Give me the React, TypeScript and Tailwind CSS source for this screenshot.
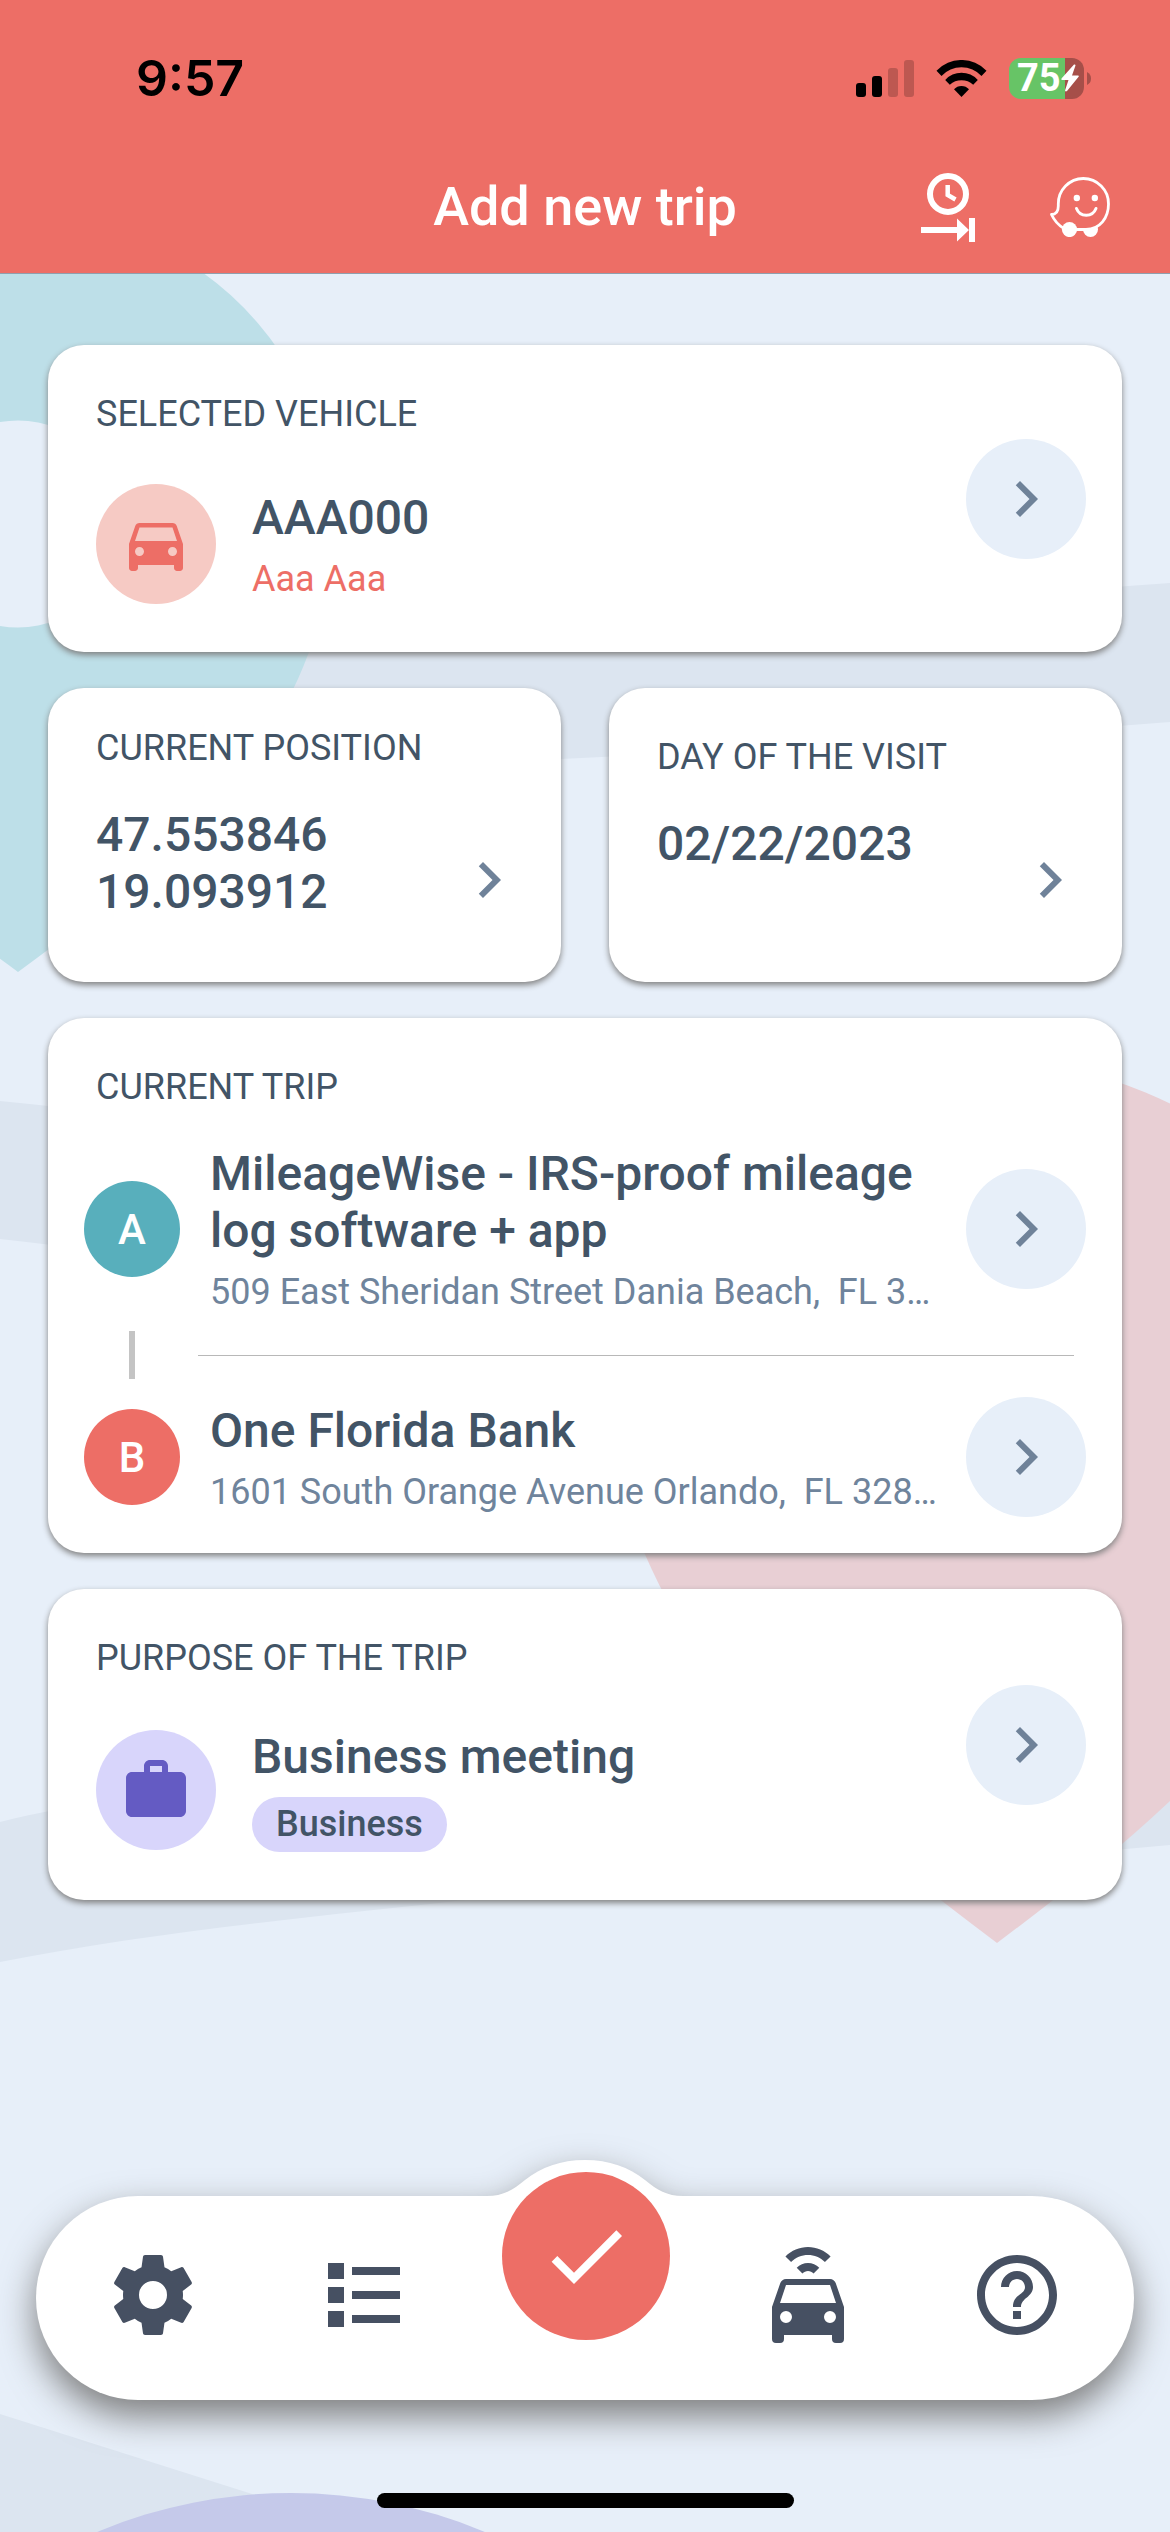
import React from 'react';
import { MdCheck, MdChevronRight, MdDirectionsCar, MdHelpOutline, MdWork } from 'react-icons/md';

interface TripStop {
  letter: string;
  name: string;
  address: string;
  badge: string;
}

// Addresses come already shortened to one line
const stops: TripStop[] = [
  {
    letter: 'A',
    name: 'MileageWise - IRS-proof mileage log software + app',
    address: '509 East Sheridan Street Dania Beach,  FL 3…',
    badge: 'bg-[#58afbc]',
  },
  {
    letter: 'B',
    name: 'One Florida Bank',
    address: '1601 South Orange Avenue Orlando,  FL 328…',
    badge: 'bg-[#ed6e66]',
  },
];

const MapBackground: React.FC = () => (
  <svg
    className="absolute inset-0 w-full h-full"
    viewBox="0 0 1170 2532"
    preserveAspectRatio="xMidYMin slice"
    aria-hidden="true"
  >
    {/* Roads */}
    <g fill="#dce5f0">
      <path d="M0 650 C400 640 800 610 1170 583 V722 C960 738 760 750 561 759 L0 800 Z" />
      <path d="M0 1101 C300 1130 600 1200 900 1250 V1400 C600 1380 300 1270 0 1239 Z" />
      <path d="M0 1822 C300 1750 800 1740 1170 1700 V1845 C900 1870 650 1878 421 1905 C270 1921 130 1936 0 1962 Z" />
      <path d="M0 2414 L249 2493 L360 2532 H0 Z" />
    </g>
    {/* Pins */}
    <path
      fill="#bddfe8"
      fillRule="evenodd"
      d="M18 972 C150 876 262 780 309 652 A316 316 0 1 0 -273 652 C-226 780 -114 876 18 972 Z M18 420.500 A103.500 103.500 0 1 1 18 627.500 A103.500 103.500 0 1 1 18 420.500 Z"
    />
    <path
      fill="#e8cfd4"
      d="M997 1943 C827 1815 672 1688 609 1451 A388 388 0 1 1 1385 1451 C1322 1688 1167 1815 997 1943 Z"
    />
    <circle cx="291" cy="2995" r="502" fill="#c5c9ea" />
  </svg>
);

const StatusBar: React.FC = () => (
  <div className="flex items-center justify-between h-[60px] pl-[136px] pr-[79px] text-black">
    <span className="font-['Inter',sans-serif] font-semibold text-[50px] leading-[60px]">9:57</span>
    <div className="flex items-center gap-[22px]">
      <svg width="58" height="37" viewBox="0 0 58 37" role="img" aria-label="Signal">
        <rect x="0" y="23" width="10" height="14" rx="3" />
        <rect x="16" y="16" width="10" height="21" rx="3" />
        <rect x="32" y="8" width="10" height="29" rx="3" opacity="0.2" />
        <rect x="48" y="0" width="10" height="37" rx="3" opacity="0.2" />
      </svg>
      <svg width="51" height="37" viewBox="0 0 50 37" role="img" aria-label="Wi-Fi">
        <path d="M0 10.700 A34.500 34.500 0 0 1 50 10.700 L45 16 A27.300 27.300 0 0 0 5 16 Z" />
        <path d="M8.700 20 A21.800 21.800 0 0 1 41.300 20 L36.700 24.700 A17.700 17.700 0 0 0 13.300 24.700 Z" />
        <path d="M17.500 29.300 A10 10 0 0 1 32.500 29.300 L25 37 Z" />
      </svg>
      <div className="flex items-center gap-[3px]">
        <div className="flex items-center h-[41px] w-[75px] pl-[8px] rounded-[12px] bg-linear-to-r from-[#67c466] from-75% to-[#a64f49] to-75%">
          <span className="font-bold text-[38px] leading-[41px] text-white">75</span>
          <svg className="shrink-0" width="18" height="28" viewBox="0 0 18 28" fill="#fff" aria-hidden="true">
            <path d="M13 0.500 L0.500 14.500 Q0 16 1 16 H7.500 L4 26.500 Q4.500 28 6 27 L17.800 12.500 Q18 11.500 17 11.500 H11 L14.500 1.500 Q14.500 0 13 0.500 Z" />
          </svg>
        </div>
        <svg width="4" height="13" viewBox="0 0 4 13" fill="#a64f49" aria-hidden="true">
          <path d="M0 0 Q4 2 4 6.500 Q4 11 0 13 Z" />
        </svg>
      </div>
    </div>
  </div>
);

const Header: React.FC = () => (
  <header className="relative bg-[#ed6e66] pt-12 border-b border-[#8f9fae]">
    <StatusBar />
    <div className="grid grid-cols-[1fr_auto_1fr] items-center h-[72px] mt-[63px] mb-[30px] px-[60px]">
      <h1 className="col-start-2 text-[54px] leading-[64px] font-medium text-white">Add new trip</h1>
      <div className="flex items-center justify-end gap-[75px]">
        <button aria-label="Trip time">
          <svg width="54" height="69" viewBox="0 0 54 69" fill="#fff">
            <circle cx="27" cy="21" r="18" fill="none" stroke="#fff" strokeWidth="6" />
            <path d="M26.700 12 V22 L34.500 26.500" fill="none" stroke="#fff" strokeWidth="4.500" />
            <path d="M0 54 H36 V45.500 L48 57 L36 68.500 V60 H0 Z" />
            <rect x="48" y="45" width="6" height="24" />
          </svg>
        </button>
        <button aria-label="Waze">
          <svg width="60" height="60" viewBox="0 0 60 60" fill="#fff">
            <circle cx="40.500" cy="52.500" r="7.500" />
            <path
              d="M19 52.500 H36 C50 52 58.500 41 58.500 27 A25.300 25.300 0 0 0 33.300 1.500 A25.300 25.300 0 0 0 8.300 27 V29 C8.300 34.500 6 37.500 1.500 37.500 C4 43 8 48 14 51.500 Z"
              fill="#ed6e66"
              stroke="#fff"
              strokeWidth="2.800"
              strokeLinejoin="round"
            />
            <circle cx="19.500" cy="52.500" r="7.600" />
            <circle cx="26.800" cy="21" r="3.200" />
            <circle cx="44.800" cy="21" r="3.200" />
            <path d="M26.500 31.500 C30 40.500 42.500 40.500 46 31.500" fill="none" stroke="#fff" strokeWidth="3" strokeLinecap="round" />
          </svg>
        </button>
      </div>
    </div>
  </header>
);

const Card: React.FC<{ className?: string; children: React.ReactNode }> = ({ className = '', children }) => (
  <section className={`bg-white rounded-[36px] shadow-[0_3px_6px_#808080] ${className}`}>{children}</section>
);

const CardTitle: React.FC<{ children: React.ReactNode }> = ({ children }) => (
  <h2 className="text-[36px] leading-[43px] uppercase">{children}</h2>
);

const OpenButton: React.FC<{ label: string }> = ({ label }) => (
  <button
    aria-label={label}
    className="flex items-center justify-center shrink-0 w-[120px] h-[120px] rounded-full bg-[#e7eff9] text-[#6f8299]"
  >
    <MdChevronRight size={72} />
  </button>
);

const NavIcon: React.FC<{ label: string; children: React.ReactNode }> = ({ label, children }) => (
  <button aria-label={label} className="w-24 h-24">
    {children}
  </button>
);

const BottomNav: React.FC = () => (
  <nav className="relative mx-9 mt-auto text-[#465062] drop-shadow-[0_16px_18px_#7c7c7c]">
    {/* Raised part behind the confirm button */}
    <svg
      className="absolute -top-9 left-1/2 -translate-x-1/2"
      width="196"
      height="38"
      viewBox="0 0 196 38"
      fill="#fff"
      aria-hidden="true"
    >
      <path d="M0 36 C16 36 26 30 38 20 C54 7 74 0 98 0 C122 0 142 7 158 20 C170 30 180 36 196 36 V38 H0 Z" />
    </svg>
    <div className="relative flex items-start justify-between rounded-full bg-white px-[69px] pt-[51px] pb-[57px]">
      <div className="flex gap-[115px]">
        <NavIcon label="Settings">
          <svg viewBox="0 0 24 24" fill="currentColor">
            <path d="M12,15.5A3.5,3.5 0 0,1 8.5,12A3.5,3.5 0 0,1 12,8.5A3.5,3.5 0 0,1 15.5,12A3.5,3.5 0 0,1 12,15.5M19.43,12.97C19.47,12.65 19.5,12.33 19.5,12C19.5,11.67 19.47,11.34 19.43,11L21.54,9.37C21.73,9.22 21.78,8.95 21.66,8.73L19.66,5.27C19.54,5.05 19.27,4.96 19.05,5.05L16.56,6.05C16.04,5.66 15.5,5.32 14.87,5.07L14.5,2.42C14.46,2.18 14.25,2 14,2H10C9.75,2 9.54,2.18 9.5,2.42L9.13,5.07C8.5,5.32 7.96,5.66 7.44,6.05L4.95,5.05C4.73,4.96 4.46,5.05 4.34,5.27L2.34,8.73C2.21,8.95 2.27,9.22 2.46,9.37L4.57,11C4.53,11.34 4.5,11.67 4.5,12C4.5,12.33 4.53,12.65 4.57,12.97L2.46,14.63C2.27,14.78 2.21,15.05 2.34,15.27L4.34,18.73C4.46,18.95 4.73,19.03 4.95,18.95L7.44,17.94C7.96,18.34 8.5,18.68 9.13,18.93L9.5,21.58C9.54,21.82 9.75,22 10,22H14C14.25,22 14.46,21.82 14.5,21.58L14.87,18.93C15.5,18.67 16.04,18.34 16.56,17.94L19.05,18.95C19.27,19.03 19.54,18.95 19.66,18.73L21.66,15.27C21.78,15.05 21.73,14.78 21.54,14.63L19.43,12.97Z" />
          </svg>
        </NavIcon>
        <NavIcon label="Trip list">
          <svg viewBox="0 0 24 24" fill="currentColor">
            <path d="M3,4H7V8H3V4M9,5V7H21V5H9M3,10H7V14H3V10M9,11V13H21V11H9M3,16H7V20H3V16M9,17V19H21V17H9" />
          </svg>
        </NavIcon>
      </div>
      <button
        aria-label="Save trip"
        className="flex items-center justify-center w-[168px] h-[168px] -mt-[75px] rounded-full bg-[#ed6e66] text-white"
      >
        <MdCheck size={96} />
      </button>
      <div className="flex gap-[113px]">
        <NavIcon label="Auto tracking">
          <svg viewBox="0 0 24 24" fill="currentColor">
            <path d="M5,14H19L17.5,9.5H6.5L5,14M17.5,19A1.5,1.5 0 0,0 19,17.5A1.5,1.5 0 0,0 17.5,16A1.5,1.5 0 0,0 16,17.5A1.5,1.5 0 0,0 17.5,19M6.5,19A1.5,1.5 0 0,0 8,17.5A1.5,1.5 0 0,0 6.5,16A1.5,1.5 0 0,0 5,17.5A1.5,1.5 0 0,0 6.5,19M18.92,9L21,15V23A1,1 0 0,1 20,24H19A1,1 0 0,1 18,23V22H6V23A1,1 0 0,1 5,24H4A1,1 0 0,1 3,23V15L5.08,9C5.28,8.42 5.85,8 6.5,8H17.5C18.15,8 18.72,8.42 18.92,9M12,0C14.12,0 16.15,0.86 17.65,2.35L16.23,3.77C15.11,2.65 13.58,2 12,2C10.42,2 8.89,2.65 7.77,3.77L6.36,2.35C7.85,0.86 9.88,0 12,0M12,4C13.06,4 14.07,4.44 14.82,5.18L13.4,6.6C13.03,6.23 12.53,6 12,6C11.5,6 10.97,6.23 10.6,6.6L9.18,5.18C9.93,4.44 10.94,4 12,4Z" />
          </svg>
        </NavIcon>
        <NavIcon label="Help">
          <MdHelpOutline size={96} />
        </NavIcon>
      </div>
    </div>
  </nav>
);

const App: React.FC = () => {
  return (
    <div className="relative flex flex-col min-h-screen overflow-hidden bg-[#e7eff9] font-['Roboto',sans-serif] text-[#425466]">
      <MapBackground />
      <Header />

      <main className="relative flex flex-col gap-9 px-12 pt-[71px] pb-24">
        {/* Vehicle */}
        <Card className="flex items-center justify-between pl-12 pr-9 py-12">
          <div>
            <CardTitle>Selected vehicle</CardTitle>
            <div className="flex items-center gap-9 mt-12">
              <div className="flex items-center justify-center w-[120px] h-[120px] rounded-full bg-[#f6cac4] text-[#ed6e66]">
                <MdDirectionsCar size={72} />
              </div>
              <div>
                <p className="text-[48px] leading-[57px] font-medium">AAA000</p>
                <p className="mt-3 text-[36px] leading-[42px] text-[#ed6e66]">Aaa Aaa</p>
              </div>
            </div>
          </div>
          <OpenButton label="Change vehicle" />
        </Card>

        {/* Position and date */}
        <div className="grid grid-cols-2 gap-12">
          <Card className="flex flex-col pl-12 pr-9 pt-[39px] pb-[62px]">
            <CardTitle>Current position</CardTitle>
            <div className="flex flex-1 justify-between mt-9">
              <p className="text-[48px] leading-[57px] font-medium">
                47.553846
                <br />
                19.093912
              </p>
              <button aria-label="Change position" className="self-end mb-1 text-[#6f8299]">
                <MdChevronRight size={72} />
              </button>
            </div>
          </Card>
          <Card className="flex flex-col pl-12 pr-9 pt-12 pb-[62px]">
            <CardTitle>Day of the visit</CardTitle>
            <div className="flex flex-1 justify-between mt-9">
              <p className="text-[48px] leading-[57px] font-medium">02/22/2023</p>
              <button aria-label="Change date" className="self-end mb-1 text-[#6f8299]">
                <MdChevronRight size={72} />
              </button>
            </div>
          </Card>
        </div>

        {/* Stops */}
        <Card className="pt-12 pb-9">
          <div className="px-12">
            <CardTitle>Current trip</CardTitle>
          </div>
          <div className="flex flex-col gap-[18px] mt-9 px-9">
            {stops.map((stop, i) => (
              <React.Fragment key={stop.letter}>
                {i > 0 && (
                  <div className="flex items-center pr-3">
                    <div className="w-[6px] h-12 ml-[45px] mr-[63px] bg-[#c4c4c4]" />
                    <div className="flex-1 h-px bg-[#b8b8b8]" />
                  </div>
                )}
                <div className="flex items-center">
                  <div
                    className={`flex items-center justify-center shrink-0 w-24 h-24 rounded-full text-[42px] font-medium text-white ${stop.badge}`}
                  >
                    {stop.letter}
                  </div>
                  <div className="flex-1 min-w-0 ml-[30px] mr-5">
                    <p className="text-[48px] leading-[57px] font-medium">{stop.name}</p>
                    <p className="mt-3 text-[36px] leading-[42px] text-[#6f849c] whitespace-pre">{stop.address}</p>
                  </div>
                  <OpenButton label={`Change stop ${stop.letter}`} />
                </div>
              </React.Fragment>
            ))}
          </div>
        </Card>

        {/* Purpose */}
        <Card className="flex items-center justify-between pl-12 pr-9 py-12">
          <div>
            <CardTitle>Purpose of the trip</CardTitle>
            <div className="flex items-center gap-9 mt-12">
              <div className="flex items-center justify-center w-[120px] h-[120px] rounded-full bg-[#d8d5fb] text-[#645bc3]">
                <MdWork size={72} />
              </div>
              <div className="flex flex-col items-start gap-3">
                <p className="text-[48px] leading-[57px] font-medium">Business meeting</p>
                <span className="px-6 rounded-full bg-[#d8d5fb] text-[36px] leading-[55px] font-medium">Business</span>
              </div>
            </div>
          </div>
          <OpenButton label="Change purpose" />
        </Card>
      </main>

      <BottomNav />

      {/* Home indicator */}
      <div className="relative self-center w-[417px] h-[15px] mt-[93px] mb-6 rounded-full bg-black" />
    </div>
  );
};

export default App;
